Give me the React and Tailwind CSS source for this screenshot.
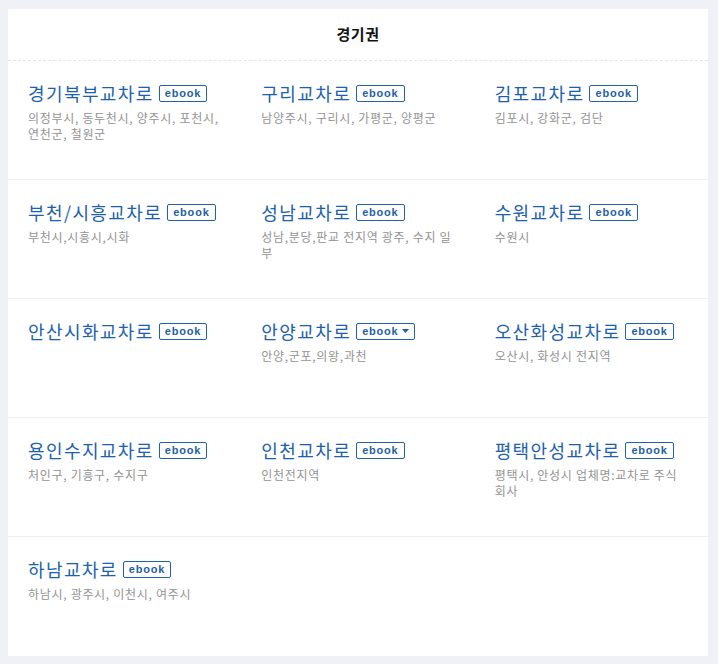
import React from 'react'

const areas = [
  { name: '경기북부교차로', desc: '의정부시, 동두천시, 양주시, 포천시, 연천군, 철원군' },
  { name: '구리교차로', desc: '남양주시, 구리시, 가평군, 양평군' },
  { name: '김포교차로', desc: '김포시, 강화군, 검단' },
  { name: '부천/시흥교차로', desc: '부천시,시흥시,시화' },
  { name: '성남교차로', desc: '성남,분당,판교 전지역 광주, 수지 일부' },
  { name: '수원교차로', desc: '수원시' },
  { name: '안산시화교차로', desc: '' },
  { name: '안양교차로', desc: '안양,군포,의왕,과천', dropdown: true },
  { name: '오산화성교차로', desc: '오산시, 화성시 전지역' },
  { name: '용인수지교차로', desc: '처인구, 기흥구, 수지구' },
  { name: '인천교차로', desc: '인천전지역' },
  { name: '평택안성교차로', desc: '평택시, 안성시 업체명:교차로 주식회사' },
  { name: '하남교차로', desc: '하남시, 광주시, 이천시, 여주시' },
]

const Badge = ({ dropdown }) => (
  <span className="inline-flex items-center gap-[3px] h-[17px] px-[5px] border border-[#1f63ad] rounded-[2px] text-[#1f5fa6] text-[11px] font-bold leading-none tracking-[0.8px] font-['Liberation_Sans',Arial,sans-serif]">
    ebook
    {dropdown && (
      <svg width="7" height="4" viewBox="0 0 7 4">
        <path d="M0 0h7L3.5 4z" fill="#1f5fa6" />
      </svg>
    )}
  </span>
)

const chunk = (arr, n) => {
  const out = []
  for (let i = 0; i < arr.length; i += n) out.push(arr.slice(i, i + n))
  return out
}

const App = () => {
  const rows = chunk(areas, 3)
  return (
    <div className="min-h-[664px] bg-[#f0f1f6] pt-[9px] pl-[8px] pr-[10px] pb-[8px] font-['Noto_Sans_CJK_KR','Malgun_Gothic',sans-serif]">
      <div className="bg-white w-[700px]">
        <div className="h-[52px] flex items-center justify-center border-b border-dashed border-[#e3e5ea]">
          <h2 className="text-[15px] font-bold text-[#111] tracking-[0.5px]">경기권</h2>
        </div>
        {rows.map((row, ri) => (
          <div
            key={ri}
            className={`grid grid-cols-3 ${ri < rows.length - 1 ? 'h-[119px] border-b border-[#eeeff2]' : 'h-[119px]'}`}
          >
            {row.map((a) => (
              <div key={a.name} className="pl-[20px] pr-[20px] pt-[21px]">
                <div className="flex items-center gap-[5px] h-[22px]">
                  <span className="text-[18px] leading-none text-[#1c61ad] tracking-[1.4px]">{a.name}</span>
                  <Badge dropdown={a.dropdown} />
                </div>
                <p className="mt-[6px] text-[12px] leading-[16px] text-[#939393] tracking-[0.7px] break-all">{a.desc}</p>
              </div>
            ))}
          </div>
        ))}
      </div>
    </div>
  )
}

export default App
